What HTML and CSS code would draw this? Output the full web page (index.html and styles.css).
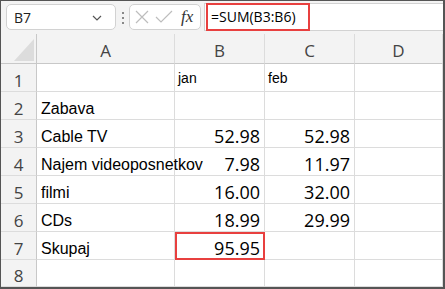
FILE: index.html
```html
<!DOCTYPE html>
<html lang="en">
<head>
    <meta charset="UTF-8">
    <title>Skupaj</title>
    <link rel="stylesheet" href="styles.css">
</head>
<body>

<div class="sheet">
    <div class="toolbar">
        <div class="name-box">
            <span>B7</span>
            <svg class="chevron" width="10" height="6" viewBox="0 0 10 6"><path d="M1 1 L5 5 L9 1" fill="none" stroke="#555" stroke-width="1.2"/></svg>
        </div>
        <div class="dots"><i></i><i></i><i></i></div>
        <div class="fx-box">
            <svg width="16" height="16" viewBox="0 0 16 16"><path d="M2 2 L14 14 M14 2 L2 14" stroke="#bdbdbd" stroke-width="1.2"/></svg>
            <svg width="18" height="16" viewBox="0 0 18 16"><path d="M1 8 L6 13 L17 2" fill="none" stroke="#bdbdbd" stroke-width="1.2"/></svg>
            <span class="fx">fx</span>
        </div>
        <div class="formula">
            <div class="formula-text">=SUM(B3:B6)</div>
        </div>
    </div>

    <div class="grid">
        <div class="corner">
            <svg width="20" height="22" viewBox="0 0 20 22"><polygon points="20,0 20,22 0,22" fill="#dcdcdc"/></svg>
        </div>
        <div class="col-head">A</div>
        <div class="col-head">B</div>
        <div class="col-head">C</div>
        <div class="col-head">D</div>

        <div class="row-head">1</div>
        <div class="cell"></div>
        <div class="cell small">jan</div>
        <div class="cell small">feb</div>
        <div class="cell"></div>

        <div class="row-head">2</div>
        <div class="cell">Zabava</div>
        <div class="cell"></div>
        <div class="cell"></div>
        <div class="cell"></div>

        <div class="row-head">3</div>
        <div class="cell">Cable TV</div>
        <div class="cell num">52.98</div>
        <div class="cell num">52.98</div>
        <div class="cell"></div>

        <div class="row-head">4</div>
        <div class="cell">Najem videoposnetkov</div>
        <div class="cell num">7.98</div>
        <div class="cell num">11.97</div>
        <div class="cell"></div>

        <div class="row-head">5</div>
        <div class="cell">filmi</div>
        <div class="cell num">16.00</div>
        <div class="cell num">32.00</div>
        <div class="cell"></div>

        <div class="row-head">6</div>
        <div class="cell">CDs</div>
        <div class="cell num">18.99</div>
        <div class="cell num">29.99</div>
        <div class="cell"></div>

        <div class="row-head">7</div>
        <div class="cell">Skupaj</div>
        <div class="cell num hl">95.95</div>
        <div class="cell"></div>
        <div class="cell"></div>

        <div class="row-head">8</div>
        <div class="cell"></div>
        <div class="cell"></div>
        <div class="cell"></div>
        <div class="cell"></div>
    </div>
</div>

</body>
</html>
```

FILE: styles.css
```css
body {
    margin: 0;
    font-family: "Liberation Sans", Arial, sans-serif;
}
.sheet {
    width: 445px;
    height: 289px;
    box-sizing: border-box;
    border: 1px solid #555;
    border-right-width: 2px;
    border-bottom-width: 2px;
    background: #f3f3f3;
    overflow: hidden;
}
.toolbar {
    height: 33px;
    display: flex;
    align-items: flex-start;
    padding: 2px 0 0 5px;
    box-sizing: border-box;
}
.name-box {
    width: 110px;
    height: 26px;
    margin-top: 1px;
    box-sizing: border-box;
    background: #fff;
    border: 1px solid #d2d2d2;
    border-radius: 5px;
    display: flex;
    align-items: center;
    justify-content: space-between;
    padding: 0 13px 0 7px;
    font-family: "Open Sans", sans-serif;
    font-size: 14px;
    color: #222;
}
.chevron {
    margin-top: 1px;
}
.dots {
    width: 13px;
    display: flex;
    flex-direction: column;
    align-items: center;
    gap: 3px;
    padding-top: 9px;
}
.dots i {
    width: 2px;
    height: 2px;
    background: #888;
}
.fx-box {
    width: 72px;
    height: 26px;
    margin-top: 1px;
    box-sizing: border-box;
    background: #fff;
    border: 1px solid #d2d2d2;
    border-radius: 5px;
    display: flex;
    align-items: center;
    gap: 5px;
    padding-left: 4px;
}
.fx {
    font-family: "Liberation Serif", serif;
    font-style: italic;
    font-size: 17px;
    color: #333;
    margin-left: 3px;
}
.formula {
    flex: 1;
    height: 28px;
    margin-left: 3px;
    box-sizing: border-box;
    background: #fff;
    border: 1px solid #d2d2d2;
    border-right: none;
    padding-left: 1px;
}
.formula-text {
    width: 104px;
    height: 28px;
    margin-top: -1px;
    box-sizing: border-box;
    border: 2px solid #e8403f;
    font-family: "Open Sans", sans-serif;
    font-size: 14px;
    line-height: 24px;
    padding-left: 3px;
    color: #000;
}
.grid {
    display: grid;
    grid-template-columns: 36px 138px 90px 90px 1fr;
    grid-template-rows: 30px repeat(7, 28px) 27px;
    background: #fff;
}
.corner, .col-head, .row-head {
    background: #f3f3f3;
    font-family: "Open Sans", sans-serif;
    font-size: 17px;
    color: #444;
    box-sizing: border-box;
}
.corner {
    border-right: 1px solid #c8c8c8;
    border-bottom: 1px solid #c8c8c8;
    display: flex;
    align-items: flex-end;
    justify-content: flex-end;
    padding: 0 2px 2px 0;
}
.col-head {
    display: flex;
    align-items: center;
    justify-content: center;
    border-right: 1px solid #dcdcdc;
    border-bottom: 1px solid #c8c8c8;
    padding-top: 3px;
}
.row-head {
    display: flex;
    align-items: center;
    justify-content: center;
    border-right: 1px solid #c8c8c8;
    border-bottom: 1px solid #dcdcdc;
    padding-top: 5px;
}
.cell {
    box-sizing: border-box;
    border-right: 1px solid #dcdcdc;
    border-bottom: 1px solid #dcdcdc;
    display: flex;
    align-items: flex-end;
    padding: 0 4px 1px 4px;
    font-size: 16px;
    line-height: 18px;
    color: #000;
    white-space: nowrap;
}
.small {
    font-size: 14px;
    padding-left: 3px;
    padding-bottom: 4px;
}
.num {
    justify-content: flex-end;
    font-family: "Open Sans", sans-serif;
    font-size: 18px;
    line-height: 20px;
    padding-bottom: 1px;
}
.hl {
    outline: 2px solid #e8403f;
    outline-offset: -2px;
}
```
